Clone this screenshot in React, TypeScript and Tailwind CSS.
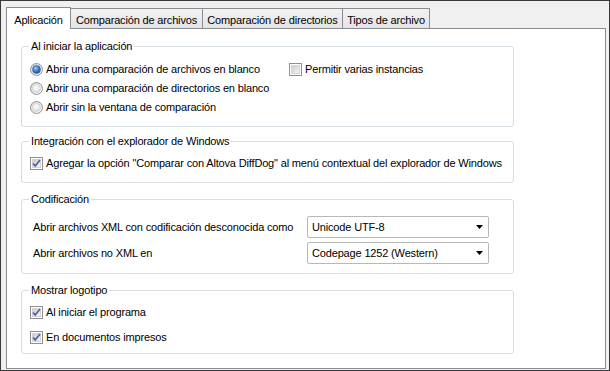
import React from 'react'

const FONT = { fontFamily: '"Liberation Sans", Arial, sans-serif' }

function Radio({ checked }: { checked?: boolean }) {
  return (
    <svg width="13" height="13" viewBox="0 0 13 13" className="shrink-0">
      <defs>
        <linearGradient id="rg-bg" x1="0" y1="0" x2="1" y2="1">
          <stop offset="0" stopColor="#d6d6d6" />
          <stop offset="1" stopColor="#ffffff" />
        </linearGradient>
        <radialGradient id="rg-dot" cx="0.4" cy="0.35" r="0.7">
          <stop offset="0" stopColor="#a9d4f5" />
          <stop offset="0.5" stopColor="#3b7fd0" />
          <stop offset="1" stopColor="#1a4d98" />
        </radialGradient>
        <radialGradient id="rg-off" cx="0.4" cy="0.35" r="0.7">
          <stop offset="0" stopColor="#ffffff" />
          <stop offset="1" stopColor="#d9d9d9" />
        </radialGradient>
      </defs>
      <circle cx="6.5" cy="6.5" r="6" fill="url(#rg-bg)" stroke="#939393" />
      <circle cx="6.5" cy="6.5" r="4" fill={checked ? 'url(#rg-dot)' : 'url(#rg-off)'} stroke={checked ? '#2a5a9b' : '#c8c8c8'} strokeWidth="0.6" />
    </svg>
  )
}

function Check({ checked }: { checked?: boolean }) {
  return (
    <svg width="13" height="13" viewBox="0 0 13 13" className="shrink-0">
      <defs>
        <linearGradient id="cb-in" x1="0" y1="0" x2="1" y2="1">
          <stop offset="0" stopColor="#cbcbcb" />
          <stop offset="1" stopColor="#f6f6f6" />
        </linearGradient>
      </defs>
      <rect x="0.5" y="0.5" width="12" height="12" fill="#ffffff" stroke="#8f8f8f" />
      <rect x="2.5" y="2.5" width="8" height="8" fill="url(#cb-in)" stroke="#d4d4d4" />
      {checked && (
        <path d="M3 6.5 L5.2 9 L10 3" fill="none" stroke="#4a5f99" strokeWidth="1.6" />
      )}
    </svg>
  )
}

function Select({ value }: { value: string }) {
  return (
    <div className="flex h-[22px] w-[182px] items-center justify-between rounded-[2px] border border-[#b8b8b8] bg-white pl-[4px] pr-[5px]">
      <span>{value}</span>
      <svg width="7" height="4" viewBox="0 0 7 4">
        <path d="M0 0 H7 L3.5 4 Z" fill="#000" />
      </svg>
    </div>
  )
}

function Group({ title, className, children }: { title: string; className: string; children: React.ReactNode }) {
  return (
    <fieldset className={`w-[493px] rounded-[3px] border border-[#d5dfe5] ${className}`}>
      <legend className="ml-[7px] px-[2px] leading-[13px]">{title}</legend>
      {children}
    </fieldset>
  )
}

const TABS = [
  { label: 'Aplicación', w: 'w-[65px]' },
  { label: 'Comparación de archivos', w: 'w-[132px]' },
  { label: 'Comparación de directorios', w: 'w-[140px]' },
  { label: 'Tipos de archivo', w: 'w-[87px]' },
]

export default function App() {
  return (
    <div
      className="h-[371px] w-[610px] whitespace-nowrap border border-[#3a3a3a] bg-[#f0f0f0] text-[11px] tracking-[-0.16px] text-black"
      style={FONT}
    >
      <div className="flex flex-col px-[5px] pt-[6px]">
        {/* pestañas */}
        <div className="flex items-end">
          {TABS.map((t, i) =>
            i === 0 ? (
              <div
                key={t.label}
                className={`relative z-10 -mb-px h-[22px] ${t.w} border border-b-0 border-[#898c95] bg-white pt-[4px] text-center`}
              >
                {t.label}
              </div>
            ) : (
              <div
                key={t.label}
                className={`h-[20px] ${t.w} border border-b-0 border-l-0 border-[#898c95] bg-gradient-to-b from-[#f3f3f3] to-[#e4e4e4] pt-[3px] text-center`}
              >
                {t.label}
              </div>
            ),
          )}
        </div>

        {/* contenido */}
        <div className="flex h-[341px] w-[600px] flex-col border border-[#898c95] bg-white pl-[14px] pt-[11px]">
          <Group title="Al iniciar la aplicación" className="h-[87px]">
            <div className="flex pl-[8px] pt-[7px]">
              <div className="flex w-[259px] flex-col">
                {[
                  ['Abrir una comparación de archivos en blanco', true],
                  ['Abrir una comparación de directorios en blanco', false],
                  ['Abrir sin la ventana de comparación', false],
                ].map(([label, on]) => (
                  <label key={label as string} className="flex h-[19px] items-center gap-[3px]">
                    <Radio checked={on as boolean} />
                    <span>{label}</span>
                  </label>
                ))}
              </div>
              <label className="flex h-[19px] items-center gap-[3px]">
                <Check />
                <span>Permitir varias instancias</span>
              </label>
            </div>
          </Group>

          <Group title="Integración con el explorador de Windows" className="mt-[8px] h-[48px]">
            <label className="mt-[6px] flex h-[19px] items-center gap-[3px] pl-[8px]">
              <Check checked />
              <span>Agregar la opción "Comparar con Altova DiffDog" al menú contextual del explorador de Windows</span>
            </label>
          </Group>

          <Group title="Codificación" className="mt-[10px] h-[81px]">
            <div className="mt-[10px] flex flex-col gap-[4px] pl-[11px]">
              <div className="flex items-center">
                <span className="w-[274px]">Abrir archivos XML con codificación desconocida como</span>
                <Select value="Unicode UTF-8" />
              </div>
              <div className="flex items-center">
                <span className="w-[274px]">Abrir archivos no XML en</span>
                <Select value="Codepage 1252 (Western)" />
              </div>
            </div>
          </Group>

          <Group title="Mostrar logotipo" className="mt-[10px] h-[70px]">
            <div className="mt-[6px] flex flex-col gap-[6px] pl-[8px]">
              <label className="flex h-[19px] items-center gap-[3px]">
                <Check checked />
                <span>Al iniciar el programa</span>
              </label>
              <label className="flex h-[19px] items-center gap-[3px]">
                <Check checked />
                <span>En documentos impresos</span>
              </label>
            </div>
          </Group>
        </div>
      </div>
    </div>
  )
}
